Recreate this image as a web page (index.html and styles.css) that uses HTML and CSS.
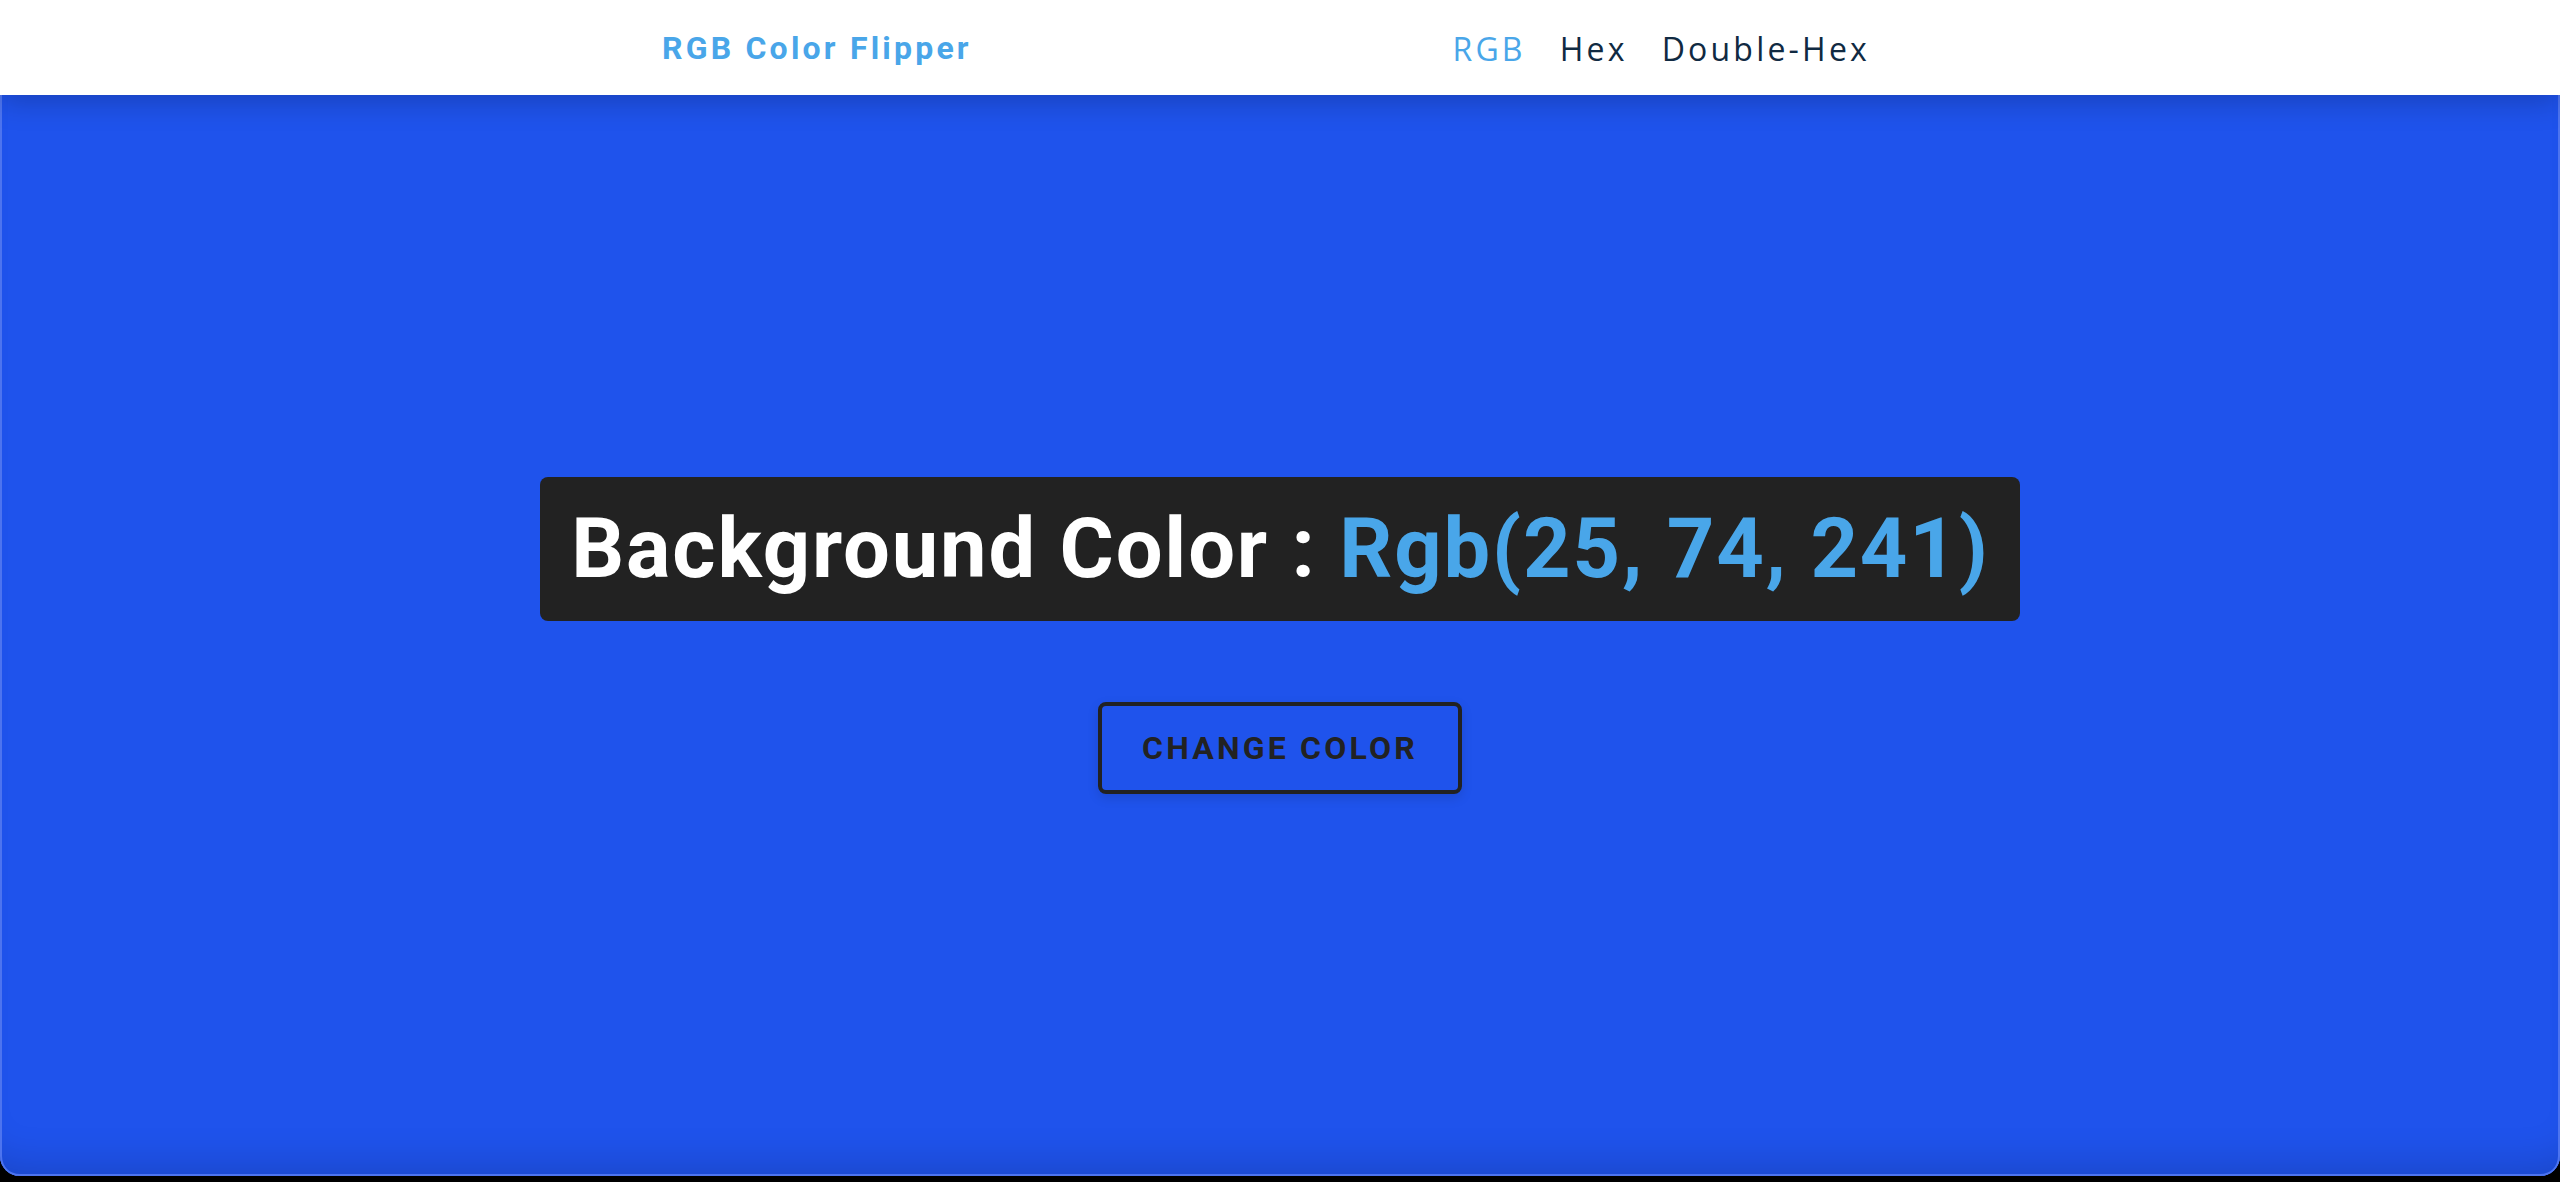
FILE: index.html
```html
<!DOCTYPE html>
<html lang="en">
<head>
<meta charset="utf-8">
<title>RGB Color Flipper</title>
<link rel="stylesheet" href="styles.css">
</head>
<body>
<div class="window">
  <nav class="navbar">
    <div class="nav-center">
      <h4 class="brand">RGB Color Flipper</h4>
      <ul class="nav-links">
        <li><a href="#" class="nav-link active">RGB</a></li>
        <li><a href="#" class="nav-link">Hex</a></li>
        <li><a href="#" class="nav-link">Double-Hex</a></li>
      </ul>
    </div>
  </nav>
  <main class="main">
    <div class="container">
      <h2 class="color-title">background color : <span class="color">rgb(25, 74, 241)</span></h2>
      <button class="btn-hero" type="button">change color</button>
    </div>
  </main>
</div>
</body>
</html>
```
FILE: styles.css
```css
* { box-sizing: border-box; margin: 0; padding: 0; }
html, body { height: 100%; }
body {
  background: #000;
  font-family: Roboto, "Open Sans", sans-serif;
  overflow: hidden;
}
.window {
  height: 1176px;
  width: 2560px;
  display: flex;
  flex-direction: column;
  background: #1f53ec;
  border-radius: 0 0 20px 20px;
  overflow: hidden;
  box-shadow:
    inset 2px 0 0 #4d74ef,
    inset -2px 0 0 #4d74ef,
    inset 0 -2px 0 #4d74ef,
    inset 0 -40px 40px -30px rgba(0, 0, 0, 0.16);
}
.navbar {
  height: 95px;
  flex: 0 0 95px;
  background: #fff;
  box-shadow: 0 6px 28px rgba(0, 0, 0, 0.22);
  position: relative;
  z-index: 1;
  display: flex;
  align-items: center;
  padding-right: 28px;
}
.nav-center {
  width: 1208px;
  margin: 0 auto;
  display: flex;
  justify-content: space-between;
  align-items: center;
}
.brand {
  font-family: Roboto, sans-serif;
  font-weight: 700;
  font-size: 32px;
  letter-spacing: 3.2px;
  color: #49a6e9;
  line-height: 1;
}
.nav-links {
  list-style: none;
  display: flex;
  gap: 34px;
  margin-top: 2px;
}
.nav-link {
  font-family: "Open Sans", sans-serif;
  font-size: 32px;
  letter-spacing: 3.2px;
  color: #102a42;
  text-decoration: none;
  line-height: 1;
}
.nav-link.active { color: #49a6e9; }
.main {
  flex: 1;
  display: flex;
  align-items: center;
  justify-content: center;
}
.container {
  display: flex;
  flex-direction: column;
  align-items: center;
  gap: 81px;
}
.color-title {
  background: #222;
  color: #fff;
  font-family: Roboto, sans-serif;
  font-weight: 700;
  font-size: 83px;
  letter-spacing: 1.85px;
  line-height: 104px;
  padding: 20px 30px 20px 31px;
  border-radius: 8px;
  text-transform: capitalize;
}
.color { color: #49a6e9; }
.btn-hero {
  font-family: Roboto, sans-serif;
  font-weight: 700;
  font-size: 32px;
  letter-spacing: 3.2px;
  text-transform: uppercase;
  color: #222;
  background: transparent;
  border: 4px solid #222;
  border-radius: 8px;
  padding: 24px 40px;
  line-height: 36px;
  box-shadow: 0 4px 12px rgba(0, 0, 0, 0.12);
  cursor: pointer;
}
```
